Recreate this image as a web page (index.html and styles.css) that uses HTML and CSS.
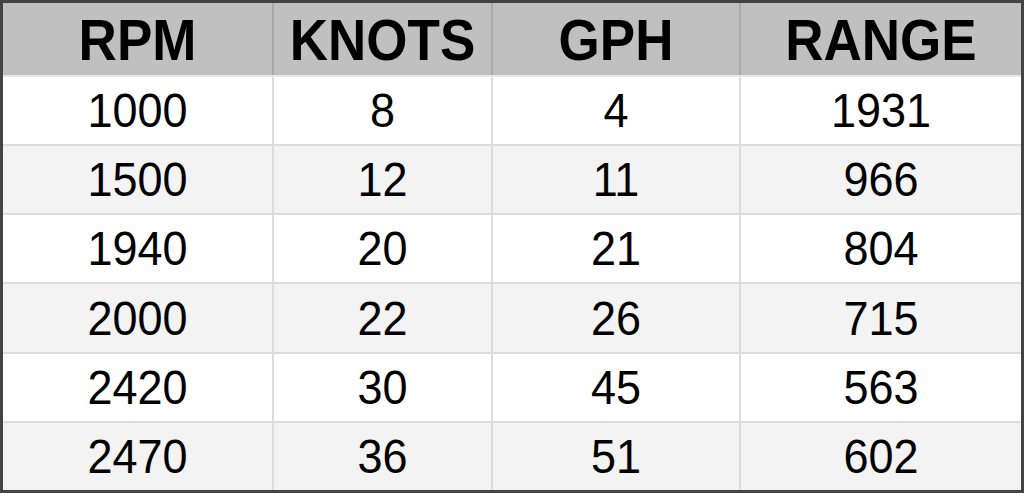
FILE: index.html
```html
<!DOCTYPE html>
<html>
<head>
<meta charset="utf-8">
<link rel="stylesheet" href="styles.css">
</head>
<body>
<div class="table">
  <div class="row head">
    <div class="cell"><span>RPM</span></div>
    <div class="cell"><span>KNOTS</span></div>
    <div class="cell"><span>GPH</span></div>
    <div class="cell"><span>RANGE</span></div>
  </div>
  <div class="row odd">
    <div class="cell"><span>1000</span></div><div class="cell"><span>8</span></div><div class="cell"><span>4</span></div><div class="cell"><span>1931</span></div>
  </div>
  <div class="row even">
    <div class="cell"><span>1500</span></div><div class="cell"><span>12</span></div><div class="cell"><span>11</span></div><div class="cell"><span>966</span></div>
  </div>
  <div class="row odd">
    <div class="cell"><span>1940</span></div><div class="cell"><span>20</span></div><div class="cell"><span>21</span></div><div class="cell"><span>804</span></div>
  </div>
  <div class="row even">
    <div class="cell"><span>2000</span></div><div class="cell"><span>22</span></div><div class="cell"><span>26</span></div><div class="cell"><span>715</span></div>
  </div>
  <div class="row odd">
    <div class="cell"><span>2420</span></div><div class="cell"><span>30</span></div><div class="cell"><span>45</span></div><div class="cell"><span>563</span></div>
  </div>
  <div class="row even">
    <div class="cell"><span>2470</span></div><div class="cell"><span>36</span></div><div class="cell"><span>51</span></div><div class="cell"><span>602</span></div>
  </div>
</div>
</body>
</html>
```
FILE: styles.css
```css
html, body {
  margin: 0;
  padding: 0;
  background: #ffffff;
}
.table {
  box-sizing: border-box;
  width: 1024px;
  height: 493px;
  border: 3px solid #444444;
  background: #dcdcdc;
  display: grid;
  grid-template-rows: 72px repeat(6, 1fr);
  row-gap: 2px;
  font-family: "Liberation Sans", Arial, sans-serif;
  color: #000000;
}
.row {
  display: grid;
  grid-template-columns: 269px 217px 246px 280px;
  column-gap: 2px;
}
.cell {
  display: flex;
  align-items: center;
  justify-content: center;
  font-size: 45px;
  line-height: 1;
}
.cell span {
  display: inline-block;
  transform: scaleY(1.06);
}
.head {
  background: #a9a9a9;
  border-bottom: 2px solid #e8e8e8;
  margin-bottom: -2px;
}
.head .cell {
  background: #c0c0c0;
  font-weight: bold;
  font-size: 53px;
}
.head .cell span {
  transform: translateY(1px) scaleY(1.08);
}
.odd .cell {
  background: #ffffff;
}
.even .cell {
  background: #f3f3f3;
}
```
